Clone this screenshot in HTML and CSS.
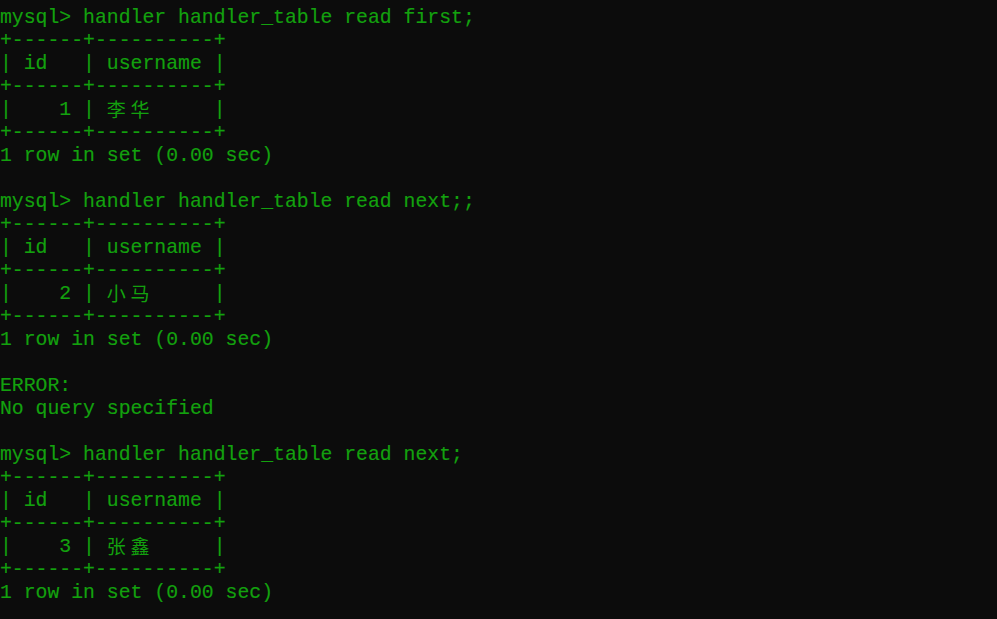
FILE: index.html
```html
<!DOCTYPE html>
<html lang="zh">
<head>
<meta charset="utf-8">
<title>mysql</title>
<link rel="stylesheet" href="styles.css">
</head>
<body>
<div class="term">
  <div class="ln">mysql&gt; handler handler_table read first;</div>
  <div class="ln">+------+----------+</div>
  <div class="ln">| id   | username |</div>
  <div class="ln">+------+----------+</div>
  <div class="ln">|    1 | <span class="cjk">李</span><span class="cjk">华</span>     |</div>
  <div class="ln">+------+----------+</div>
  <div class="ln">1 row in set (0.00 sec)</div>
  <div class="ln"></div>
  <div class="ln">mysql&gt; handler handler_table read next;;</div>
  <div class="ln">+------+----------+</div>
  <div class="ln">| id   | username |</div>
  <div class="ln">+------+----------+</div>
  <div class="ln">|    2 | <span class="cjk">小</span><span class="cjk">马</span>     |</div>
  <div class="ln">+------+----------+</div>
  <div class="ln">1 row in set (0.00 sec)</div>
  <div class="ln"></div>
  <div class="ln">ERROR:</div>
  <div class="ln">No query specified</div>
  <div class="ln"></div>
  <div class="ln">mysql&gt; handler handler_table read next;</div>
  <div class="ln">+------+----------+</div>
  <div class="ln">| id   | username |</div>
  <div class="ln">+------+----------+</div>
  <div class="ln">|    3 | <span class="cjk">张</span><span class="cjk">鑫</span>     |</div>
  <div class="ln">+------+----------+</div>
  <div class="ln">1 row in set (0.00 sec)</div>
  <div class="ln"></div>
</div>
</body>
</html>
```

FILE: styles.css
```css
html, body {
  margin: 0;
  padding: 0;
  background: #0c0c0c;
  width: 997px;
  height: 619px;
  overflow: hidden;
}

.term {
  display: flex;
  flex-direction: column;
  padding: 7px 0 0 0;
  font-family: "Liberation Mono", "Noto Sans CJK SC", monospace;
  font-size: 19.8px;
  line-height: 23px;
  color: #13a10e;
  -webkit-text-stroke: 0.15px #13a10e;
}

.ln {
  height: 23px;
  white-space: pre;
}

.cjk {
  display: inline-block;
  width: 23.76px;
  height: 19px;
  padding-top: 4px;
  font-family: "Liberation Mono", "Noto Sans CJK SC", sans-serif;
  font-size: 19px;
  line-height: 19px;
  vertical-align: top;
  -webkit-text-stroke: 0;
}
```
